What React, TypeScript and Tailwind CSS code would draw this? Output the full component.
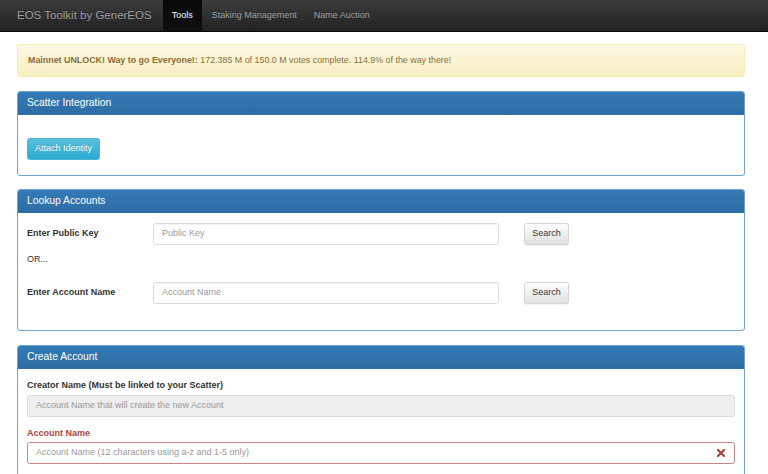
import React from "react";

const font = { fontFamily: '"Liberation Sans", Arial, Helvetica, sans-serif' };

function PanelHeading({ title }: { title: string }) {
  return (
    <div className="h-[23px] flex items-center px-[9px] bg-[linear-gradient(to_bottom,#337ab7,#2e6da4)] border-b border-[#2f6fa8] rounded-t-[2px]">
      <span className="text-white text-[10.3px] leading-none">{title}</span>
    </div>
  );
}

function SearchBtn() {
  return (
    <button className="ml-[25px] h-[22px] w-[45px] flex items-center justify-center rounded-[2.5px] border border-[#d4d4d4] bg-[linear-gradient(to_bottom,#ffffff,#e0e0e0)] text-[#333] text-[9px] shadow-[0_1px_0_rgba(0,0,0,0.05)]">
      Search
    </button>
  );
}

function TextInput({ placeholder, className = "" }: { placeholder: string; className?: string }) {
  return (
    <div
      className={`h-[22px] flex items-center px-[8px] rounded-[2.5px] border border-[#dcdcdc] bg-white text-[9px] text-[#999] shadow-[inset_0_1px_1px_rgba(0,0,0,0.05)] ${className}`}
    >
      {placeholder}
    </div>
  );
}

export default function App() {
  return (
    <div style={font} className="w-[768px] h-[474px] overflow-hidden bg-white text-[#333]">
      {/* Navbar */}
      <div className="h-[32px] border-b border-[#080808] bg-[linear-gradient(to_bottom,#3c3c3c,#222222)] flex items-stretch">
        <div className="pl-[17px] pr-[11px] flex items-center text-[11.5px] text-[#9d9d9d] [text-shadow:0_-1px_0_rgba(0,0,0,0.25)]">
          EOS Toolkit by GenerEOS
        </div>
        <div className="w-[39px] flex items-center justify-center text-[9px] text-white bg-[linear-gradient(to_bottom,#080808,#0f0f0f)]">
          Tools
        </div>
        <div className="px-[10px] flex items-center text-[9px] text-[#9d9d9d]">Staking Management</div>
        <div className="px-[7px] flex items-center text-[9px] text-[#9d9d9d]">Name Auction</div>
      </div>

      <div className="ml-[17px] w-[728px]">
        {/* Alert */}
        <div className="mt-[12px] h-[33px] flex items-center px-[10px] rounded-[2.5px] border border-[#f7ecb5] bg-[linear-gradient(to_bottom,#fcf8e3,#f8efc0)] text-[8.9px] text-[#8a6d3b]">
          <span className="font-bold">Mainnet UNLOCK! Way to go Everyone!:</span>
          <span>&nbsp;172.385 M of 150.0 M votes complete. 114.9% of the way there!</span>
        </div>

        {/* Scatter Integration */}
        <div className="mt-[14px] border border-[#6fa3d0] rounded-[3px]">
          <PanelHeading title="Scatter Integration" />
          <div className="pt-[23px] pb-[15px] px-[9px]">
            <button className="h-[22px] w-[73px] flex items-center justify-center rounded-[2.5px] border border-[#4fb3d6] bg-[linear-gradient(to_bottom,#5bc0de,#2aabd2)] text-white text-[9px] [text-shadow:0_-1px_0_rgba(0,0,0,0.2)]">
              Attach Identity
            </button>
          </div>
        </div>

        {/* Lookup Accounts */}
        <div className="mt-[13px] border border-[#6fa3d0] rounded-[3px]">
          <PanelHeading title="Lookup Accounts" />
          <div className="pt-[10px] pb-[26px] px-[9px]">
            <div className="flex items-center">
              <div className="w-[126px] text-[9px] font-bold">Enter Public Key</div>
              <TextInput placeholder="Public Key" className="w-[346px]" />
              <SearchBtn />
            </div>
            <div className="mt-[8px] h-[13px] flex items-center text-[9px]">OR...</div>
            <div className="mt-[16px] flex items-center">
              <div className="w-[126px] text-[9px] font-bold">Enter Account Name</div>
              <TextInput placeholder="Account Name" className="w-[346px]" />
              <SearchBtn />
            </div>
          </div>
        </div>

        {/* Create Account */}
        <div className="mt-[14px] border border-[#6fa3d0] rounded-[3px] h-[200px]">
          <PanelHeading title="Create Account" />
          <div className="pt-[10px] px-[9px]">
            <div className="h-[13px] flex items-center text-[9px] font-bold">
              Creator Name (Must be linked to your Scatter)
            </div>
            <div className="mt-[3px] h-[22px] flex items-center px-[8px] rounded-[2.5px] border border-[#dcdcdc] bg-[#eeeeee] text-[9px] text-[#999]">
              Account Name that will create the new Account
            </div>
            <div className="mt-[10px] h-[13px] flex items-center text-[9px] font-bold text-[#a94442]">
              Account Name
            </div>
            <div className="mt-[2px] h-[22px] flex items-center justify-between px-[8px] rounded-[2.5px] border border-[#c98786] bg-white text-[9px] text-[#999]">
              <span>Account Name (12 characters using a-z and 1-5 only)</span>
              <svg width="8" height="8" viewBox="0 0 8 8" className="mr-[1px]">
                <path d="M1 1 L7 7 M7 1 L1 7" stroke="#a94442" strokeWidth="2.2" strokeLinecap="square" />
              </svg>
            </div>
          </div>
        </div>
      </div>
    </div>
  );
}
